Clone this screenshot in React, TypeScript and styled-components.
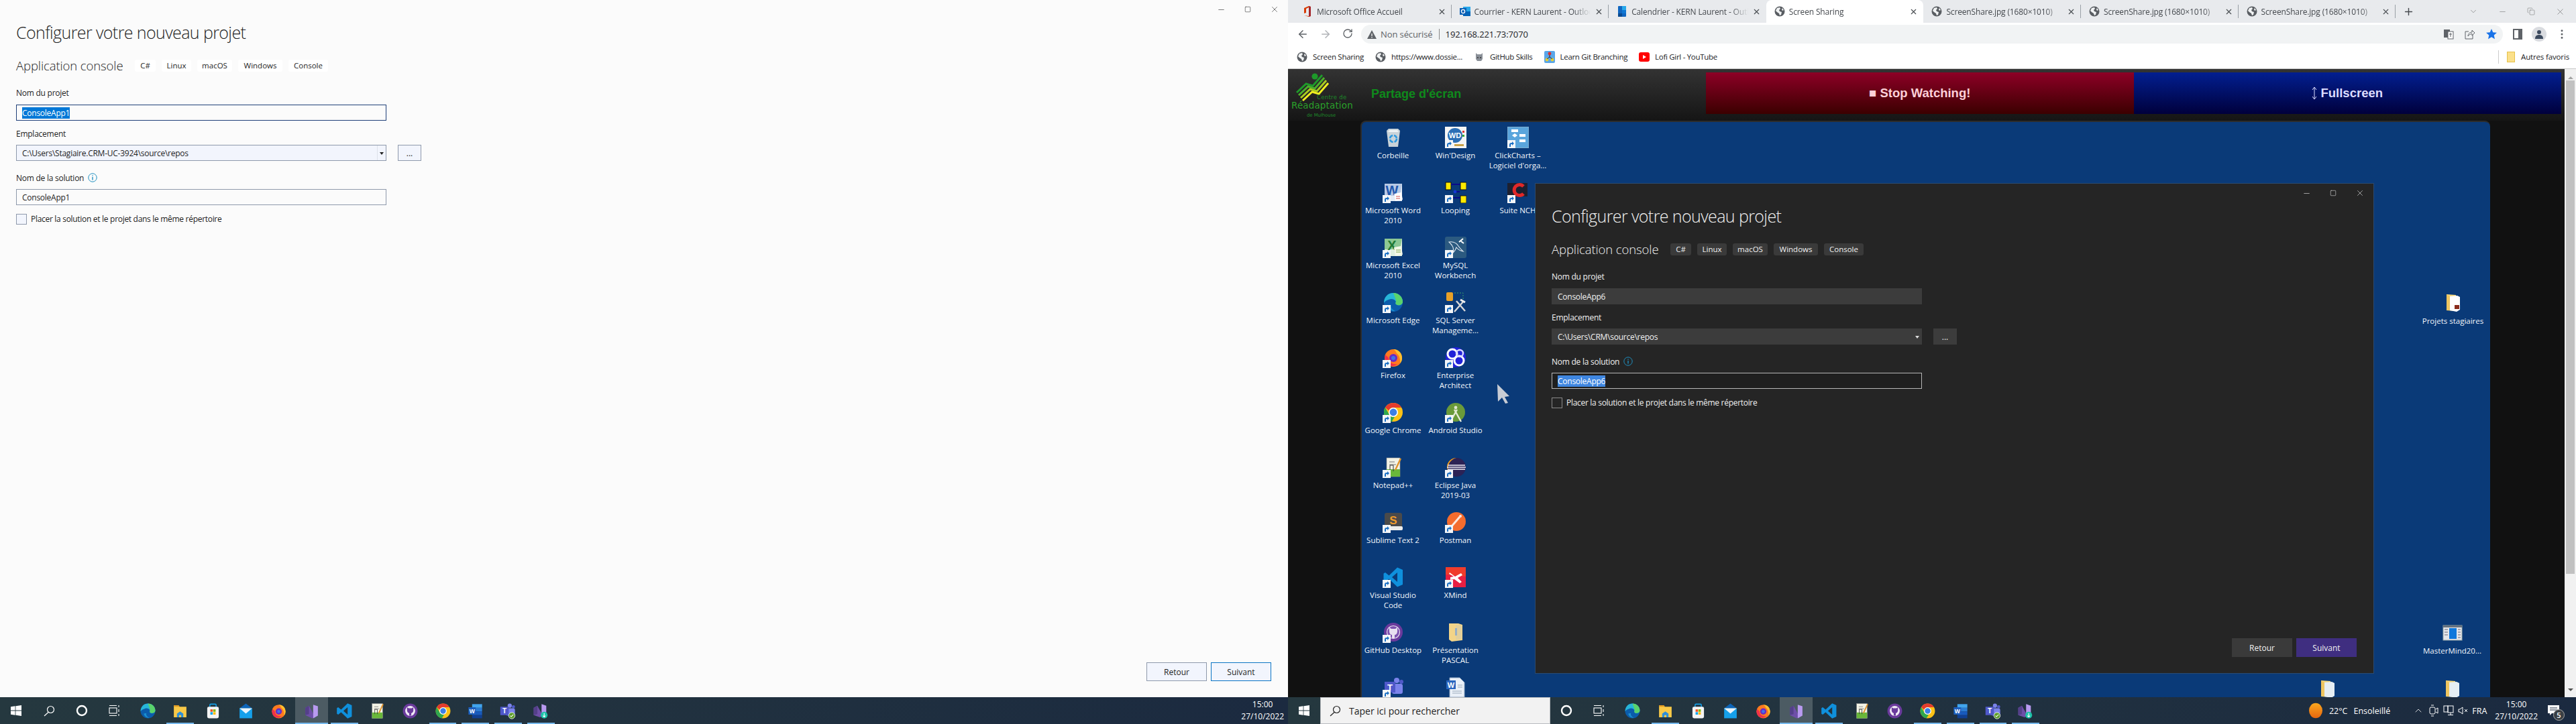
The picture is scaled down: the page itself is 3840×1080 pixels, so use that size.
import React from "react";
import styled, { createGlobalStyle } from "styled-components";
import { ArrowLeft, ArrowRight, RotateCw, Plus, ChevronDown, ChevronUp, Minus, X, Square, MoreVertical, Copy } from "lucide-react";

const UI = `"Open Sans", "Noto Sans", sans-serif`;

const GlobalStyle = createGlobalStyle`
  html, body { margin: 0; padding: 0; width: 3840px; height: 1080px; overflow: hidden; background: #000; }
  body { font-family: ${UI}; }
  * { box-sizing: border-box; }
`;

/* ---------- drawings ---------- */

const Svg: React.FC<{ size?: number; children: React.ReactNode }> = ({ size = 32, children }) => (
  <svg width={size} height={size} viewBox="0 0 32 32">{children}</svg>
);

const art: Record<string, React.ReactNode> = {
  edge: <>
    <circle cx="16" cy="16" r="14" fill="#0b5cab" />
    <path d="M2 17C2 8 8 2 16 2c8 0 14 6 14 13 0 4-4 6-8 5-3-1-3-3-2-5-2-4-7-5-11-3-4 1-6 3-7 5z" fill="#27b5d8" />
    <path d="M16 2c8 0 14 6 14 13 0 4-4 6-8 5-3-1-3-3-2-5 0-4-3-10-4-13z" fill="#5ad26b" />
    <path d="M8 21c1 5 6 9 11 8-5-2-7-5-6-9z" fill="#1a8fd0" />
  </>,
  chrome: <>
    <circle cx="16" cy="16" r="14" fill="#fbc116" />
    <path d="M16 2a14 14 0 0 1 12.1 7H16a7 7 0 0 0-6.6 4.6L3.9 9A14 14 0 0 1 16 2z" fill="#e33b2e" />
    <path d="M3.9 9 10 19.6a7 7 0 0 0 8 3.2L13.8 30A14 14 0 0 1 3.9 9z" fill="#2fa84f" />
    <circle cx="16" cy="16" r="7" fill="#fff" /><circle cx="16" cy="16" r="5.4" fill="#3b7fe6" />
  </>,
  firefox: <>
    <circle cx="16" cy="17" r="13" fill="#ff7a1f" />
    <path d="M16 4c8 0 13 6 13 13 0 3-1 6-3 8 1-6-1-12-5-15-1-3-3-5-5-6z" fill="#ffc02e" />
    <path d="M4 12c-2 6 0 13 6 16 4 2 9 1 12-2-6 1-13-2-13-8 0-3-3-3-5-6z" fill="#f0304a" />
    <circle cx="16" cy="17" r="6" fill="#6a2bc4" /><circle cx="16" cy="17" r="3" fill="#3f74e8" />
  </>,
  vs: <>
    <path d="M4 10l7-4 12 22-6 2L4 24z" fill="#6e4fa8" />
    <path d="M4 10l7-4v16l-7 2z" fill="#544089" />
    <path d="M19 4l9 3v18l-9 5z" fill="#b99af0" />
  </>,
  vscode: <path fillRule="evenodd" d="M22 1.5l8 3.5v22l-8 3.5L9.5 18.5 4 23l-2.5-1.5v-11L4 9l5.5 4.5L22 1.5zM22 9l-8 7 8 7z" fill="#0f90dc" />,
  notepad: <>
    <rect x="6" y="2" width="20" height="28" fill="#f3f3e6" stroke="#888" strokeWidth=".6" />
    <rect x="6" y="19" width="20" height="11" fill="#69b83a" />
    <path d="M10 8h8M10 12h10" stroke="#777" strokeWidth="1" />
    <path d="M27 3l-8 17" stroke="#e0922a" strokeWidth="2.4" />
    <path d="M11 22v-9h5v9" stroke="#333" fill="none" strokeWidth="1" />
  </>,
  github: <>
    <circle cx="16" cy="16" r="14" fill="#6a3a9c" />
    <circle cx="16" cy="16" r="9.5" fill="#7e51b0" stroke="#e8dff0" strokeWidth="1.2" />
    <path d="M10 9l3 2h6l3-2v6c0 3-2 5-4 5v5h-4v-5c-2 0-4-2-4-5z" fill="#e8dff0" />
  </>,
  githubDark: <>
    <circle cx="16" cy="16" r="14" fill="#6a3a9c" />
    <circle cx="16" cy="16" r="9.5" fill="#f0eaf5" />
    <path d="M10 9l3 2h6l3-2v6c0 3-2 5-4 5v5h-4v-5c-2 0-4-2-4-5z" fill="#6a3a9c" />
  </>,
  word: <>
    <rect x="10" y="3" width="19" height="7" fill="#41a5ee" /><rect x="10" y="10" width="19" height="7" fill="#2b7cd3" />
    <rect x="10" y="17" width="19" height="7" fill="#185abd" /><rect x="10" y="24" width="19" height="6" fill="#103f91" />
    <rect x="3" y="9" width="14" height="14" fill="#1d5fbf" />
    <text x="10" y="20" fontSize="11" fontWeight="700" fontFamily="Liberation Sans" fill="#fff" textAnchor="middle">W</text>
  </>,
  teams: <>
    <circle cx="21" cy="6" r="4" fill="#7b83eb" /><circle cx="28" cy="8" r="3" fill="#5059c9" />
    <rect x="14" y="11" width="16" height="15" rx="3" fill="#7b83eb" />
    <rect x="3" y="8" width="16" height="16" fill="#4f58ca" />
    <text x="11" y="21" fontSize="13" fontWeight="700" fontFamily="Liberation Sans" fill="#fff" textAnchor="middle">T</text>
  </>,
  teamsBadge: <>
    <circle cx="19" cy="6" r="4" fill="#7b83eb" /><circle cx="26" cy="8" r="3" fill="#5059c9" />
    <rect x="12" y="11" width="17" height="14" rx="3" fill="#7b83eb" />
    <rect x="1" y="8" width="16" height="16" fill="#4f58ca" />
    <text x="9" y="21" fontSize="13" fontWeight="700" fontFamily="Liberation Sans" fill="#fff" textAnchor="middle">T</text>
    <circle cx="23" cy="25" r="6" fill="#5d9c2a" stroke="#fff" strokeWidth="1" />
    <path d="M20 25l2 2 4-4" stroke="#fff" fill="none" strokeWidth="1.4" />
  </>,
  vsinstall: <>
    <path d="M2 10l7-4 11 20-6 2L2 24z" fill="#6e4fa8" />
    <path d="M2 10l7-4v16l-7 2z" fill="#544089" />
    <path d="M17 3l9 3v14l-9 6z" fill="#b99af0" />
    <circle cx="22" cy="24" r="6.5" fill="#1dc2a8" />
    <path d="M22 20v7M19.5 25l2.5 2.5 2.5-2.5" stroke="#fff" strokeWidth="1.4" fill="none" />
  </>,
  explorer: <>
    <path d="M4 5h9l2 3h13v20H4z" fill="#f8c948" />
    <path d="M4 5h9l2 3H4z" fill="#e09a22" />
    <path d="M10 28v-7l6-4 6 4v7h-4v-4h-4v4z" fill="#2e8fd8" />
  </>,
  store: <>
    <path d="M10 9V5a2 2 0 0 1 2-2h8a2 2 0 0 1 2 2v4" fill="none" stroke="#14a0e8" strokeWidth="2" />
    <rect x="5" y="8" width="22" height="22" rx="3" fill="#f4f4f4" />
    <rect x="11" y="13" width="4.6" height="4.6" fill="#f25022" /><rect x="16.4" y="13" width="4.6" height="4.6" fill="#7fba00" />
    <rect x="11" y="18.4" width="4.6" height="4.6" fill="#00a4ef" /><rect x="16.4" y="18.4" width="4.6" height="4.6" fill="#ffb900" />
  </>,
  mail: <>
    <path d="M16 2l12 9H4z" fill="#0c64b8" />
    <rect x="4" y="11" width="24" height="19" fill="#15a0ea" />
    <path d="M4 11l12 10 12-10z" fill="#e8f4fc" />
  </>,
  recycle: <>
    <path d="M6 6l3-3h14l3 3-3 24H9z" fill="#c9d3d9" />
    <path d="M10 5h12l2 3H8z" fill="#eef2f4" />
    <circle cx="16" cy="18" r="5" fill="none" stroke="#2f9ae0" strokeWidth="2.6" strokeDasharray="6 2" />
  </>,
  windesign: <>
    <rect x="0" y="0" width="32" height="32" fill="#f5f5f5" />
    <circle cx="15" cy="13" r="11" fill="#2d6fb5" />
    <text x="15" y="17" fontSize="11" fontWeight="700" fontFamily="Liberation Sans" fill="#fff" textAnchor="middle">WD</text>
    <rect x="26" y="6" width="3" height="3" fill="#d33" /><rect x="26" y="12" width="3" height="3" fill="#3a3" />
    <rect x="14" y="26" width="14" height="3" fill="#c9a24a" />
  </>,
  clickcharts: <>
    <rect x="0" y="0" width="32" height="32" fill="#5aa5dc" stroke="#9cb4c6" />
    <rect x="6" y="4" width="10" height="4" fill="#fff" /><path d="M11 10l4 3-4 3-4-3z" fill="#fff" />
    <rect x="18" y="11" width="9" height="4" fill="#fff" /><rect x="18" y="19" width="9" height="4" fill="#fff" />
  </>,
  wordold: <>
    <path d="M3 3h26v26H3z" fill="#e6eef8" />
    <path d="M3 3l26 0-3 18H3z" fill="#2a5caa" opacity=".25" />
    <text x="14" y="20" fontSize="20" fontWeight="700" fontFamily="Liberation Sans" fill="#1f58ae" textAnchor="middle">W</text>
    <rect x="18" y="17" width="11" height="11" fill="#fff" transform="rotate(-10 23 22)" />
    <path d="M20 22h6M20 25h6" stroke="#d05050" strokeWidth="1" />
  </>,
  looping: <>
    <rect x="1" y="1" width="8" height="11" fill="#ffea00" stroke="#111" />
    <rect x="23" y="1" width="9" height="11" fill="#ffea00" stroke="#111" />
    <rect x="23" y="21" width="9" height="11" fill="#ffea00" stroke="#111" />
    <path d="M9 4h14M9 24h14M14 15h8" stroke="#0a0a8a" strokeWidth="2" />
    <circle cx="15" cy="15" r="2.4" fill="#1438d0" />
  </>,
  nch: <>
    <rect x="0" y="2" width="30" height="20" fill="#1c2030" />
    <path d="M24 7a8 8 0 1 0 0 11" fill="none" stroke="#e02828" strokeWidth="5" />
  </>,
  excel: <>
    <path d="M3 3h26v26H3z" fill="#dff0df" />
    <path d="M3 3h26l-3 16H3z" fill="#3aa04a" opacity=".5" />
    <text x="14" y="20" fontSize="20" fontWeight="700" fontFamily="Liberation Sans" fill="#1f7a35" textAnchor="middle">X</text>
    <rect x="18" y="15" width="11" height="13" fill="#f4f8e8" transform="rotate(-10 23 22)" />
    <path d="M20 20h7M20 23h7" stroke="#7aa84a" strokeWidth="1" />
  </>,
  mysql: <>
    <rect x="0" y="0" width="32" height="32" rx="3" fill="#2c5a80" />
    <path d="M6 8c6-1 11 1 14 6 2 3 5 6 7 8-4-1-8-3-10-6-1 3-3 6-5 8 1-4 1-7-1-10-1-2-3-4-5-6z" fill="none" stroke="#dfe8f0" strokeWidth="1.1" />
    <path d="M21 8l6-5M24 7l4 3" stroke="#fff" strokeWidth="2" />
  </>,
  ssms: <>
    <rect x="2" y="1" width="10" height="13" rx="2" fill="#e8a028" />
    <path d="M14 2h13v11" stroke="#3aa06a" strokeDasharray="2 2" fill="none" />
    <path d="M14 30L28 14M17 14l13 15" stroke="#d8d8d8" strokeWidth="2.4" />
    <path d="M23 12l7 4" stroke="#eee" strokeWidth="3" />
  </>,
  ea: <>
    <circle cx="16" cy="16" r="15" fill="#2222d8" />
    <circle cx="11" cy="11" r="7" fill="none" stroke="#fff" strokeWidth="3" />
    <circle cx="21" cy="21" r="7" fill="none" stroke="#fff" strokeWidth="3" />
    <circle cx="22" cy="10" r="5" fill="none" stroke="#d8d8ff" strokeWidth="2.4" />
  </>,
  android: <>
    <circle cx="16" cy="16" r="14" fill="#6a9a3a" />
    <path d="M8 30l10-18M24 30L14 12" stroke="#e6ecd8" strokeWidth="2.4" />
    <circle cx="16" cy="9" r="2.4" fill="#dfe6d0" />
  </>,
  eclipse: <>
    <circle cx="17" cy="16" r="14" fill="#2c2255" />
    <path d="M3 16A14 14 0 0 1 17 2 16 16 0 0 0 5 22c-1-2-2-4-2-6z" fill="#f0a020" />
    <path d="M4 13h26M3 16h28M4 19h26" stroke="#f2f2fa" strokeWidth="1.4" />
  </>,
  sublime: <>
    <rect x="3" y="2" width="26" height="24" rx="3" fill="#4a4a4a" />
    <rect x="2" y="22" width="28" height="6" rx="2" fill="#ececec" />
    <text x="16" y="19" fontSize="17" fontWeight="700" fontFamily="Liberation Sans" fill="#f09a2a" textAnchor="middle">S</text>
  </>,
  postman: <>
    <circle cx="17" cy="15" r="14" fill="#f46c2e" />
    <path d="M10 22L22 8" stroke="#fbe7dc" strokeWidth="3" />
    <circle cx="23" cy="7" r="2" fill="#fbe7dc" />
  </>,
  xmind: <>
    <rect x="1" y="1" width="30" height="30" fill="#e81f42" />
    <path d="M1 1h30v14L1 12z" fill="#f03c2c" />
    <path d="M7 9l8 6 9-5 2 3-7 4 6 6-3 2-8-6-6 1v-4l5-1-7-4z" fill="#fff" />
  </>,
  folderDoc: <>
    <path d="M6 3l14 1v24L6 27z" fill="#f6d87e" />
    <path d="M11 6l11-1 4 2v19l-5 3-10-2z" fill="#fff" />
    <path d="M6 3l5 3v21l-5 0z" fill="#eec560" />
    <rect x="18" y="19" width="7" height="6" fill="#8a2c1c" />
  </>,
  folderDocB: <>
    <path d="M6 3l14 1v24L6 27z" fill="#f6d87e" />
    <path d="M11 6l11-1 4 2v19l-5 3-10-2z" fill="#e6eef4" />
    <path d="M6 3l5 3v21l-5 0z" fill="#eec560" />
  </>,
  folderTall: <>
    <path d="M6 3l14 0 6 2v23l-16 2-4-3z" fill="#f3d488" />
    <path d="M16 5l9 1v20l-9 2z" fill="#e2cf9c" />
    <rect x="15" y="10" width="3" height="11" fill="#9ab0c4" />
  </>,
  mastermind: <>
    <rect x="2" y="5" width="28" height="22" fill="#e4e6ea" stroke="#9aa" />
    <rect x="11" y="9" width="11" height="16" fill="#0f78dc" />
    <path d="M4 11h5M4 15h5M4 19h5M24 11h4M24 15h4M24 19h4M24 23h4" stroke="#667" strokeWidth="1" />
    <rect x="2" y="5" width="28" height="3" fill="#67727e" />
  </>,
  worddoc: <>
    <path d="M7 2h15l7 7v22H7z" fill="#eaf0f8" stroke="#8ea6c2" />
    <rect x="2" y="6" width="14" height="13" fill="#2a66c0" />
    <text x="9" y="16.5" fontSize="11" fontWeight="700" fontFamily="Liberation Sans" fill="#fff" textAnchor="middle">W</text>
    <path d="M11 22h14M11 25h14M19 13h7M19 16h7" stroke="#9ab" strokeWidth="1" />
  </>,
};

const Art: React.FC<{ name: string; size?: number }> = ({ name, size = 32 }) => <Svg size={size}>{art[name]}</Svg>;

const Globe = () => (
  <svg width="16" height="16" viewBox="0 0 16 16">
    <circle cx="8" cy="8" r="7.5" fill="#5a5e63" />
    <path d="M4 3l4-1 1 2-2 2 1 2 3 1-1 4-2 1-1-3-3-2-2-2zM12 3l2 3-2 1-1-2z" fill="#f1f3f4" />
  </svg>
);

const OfficeIcon = () => (
  <svg width="16" height="16" viewBox="0 0 16 16">
    <path d="M3 3l7-3 3 1v14l-3 1-7-2 7 1V2L6 4v6l-3 1z" fill="#d83b01" />
    <path d="M10 0l3 1v14l-3 1z" fill="#a4262c" />
  </svg>
);
const OutlookIcon = () => (
  <svg width="16" height="16" viewBox="0 0 16 16">
    <rect x="5" y="1" width="11" height="14" fill="#28a8ea" /><rect x="5" y="8" width="11" height="7" fill="#0364b8" />
    <rect x="0" y="3" width="10" height="10" fill="#0a5fb5" /><circle cx="5" cy="8" r="2.6" fill="none" stroke="#fff" strokeWidth="1.3" />
  </svg>
);
const CalendarIcon = () => (
  <svg width="16" height="16" viewBox="0 0 16 16">
    <rect x="2" y="0" width="12" height="16" rx="1" fill="#1066c0" /><rect x="8" y="0" width="6" height="6" fill="#28a8ea" />
    <rect x="8" y="6" width="6" height="5" fill="#0f78d4" /><rect x="2" y="11" width="6" height="5" fill="#0a4a90" />
  </svg>
);

const ShortcutMark = () => (
  <svg width="12" height="12" viewBox="0 0 12 12">
    <rect width="12" height="12" fill="#f4f6f8" />
    <path d="M3 10V7c0-2 1-3 3-3h1V2l3 3-3 3V6H6c-1 0-1 1-1 2v2z" fill="#1a6fc4" />
  </svg>
);

const WinLogo: React.FC<{ size?: number }> = ({ size = 16 }) => (
  <svg width={size} height={size} viewBox="0 0 16 16" fill="#fff">
    <path d="M0 2.3l6.6-1v6.3H0zM7.4 1.2L16 0v7.6H7.4zM0 8.4h6.6v6.3l-6.6-1zM7.4 8.4H16V16l-8.6-1.2z" />
  </svg>
);
const SearchGlyph: React.FC<{ color: string }> = ({ color }) => (
  <svg width="17" height="17" viewBox="0 0 17 17" fill="none" stroke={color} strokeWidth="1.2">
    <circle cx="10.5" cy="6.5" r="5" /><path d="M7 10.5L1 16" />
  </svg>
);
const CortanaGlyph = () => (
  <svg width="18" height="18" viewBox="0 0 18 18"><circle cx="9" cy="9" r="7" fill="none" stroke="#fff" strokeWidth="2.4" /></svg>
);
const TaskViewGlyph = () => (
  <svg width="18" height="18" viewBox="0 0 18 18" fill="none" stroke="#fff" strokeWidth="1.1">
    <rect x="1" y="5" width="11" height="8" /><path d="M1 1.5h11M1 16.5h11M15 1v3M15 7v4M15 14v3" />
  </svg>
);

/* ---------- page frame ---------- */

const Screen = styled.div`
  display: grid;
  grid-template-columns: 1920px 1920px;
  width: 3840px;
  height: 1080px;
`;
const Monitor = styled.div`
  display: flex;
  flex-direction: column;
  height: 1080px;
  min-width: 0;
`;
const MonitorBody = styled.div`
  flex: 1;
  min-height: 0;
  display: flex;
  flex-direction: column;
  overflow: hidden;
`;

/* ---------- taskbar ---------- */

const Taskbar = styled.div`
  height: 40px;
  flex: none;
  display: flex;
  align-items: stretch;
  background: linear-gradient(90deg, #25383f 0%, #22333f 40%, #1b2a40 100%);
  color: #fff;
`;
const TaskCell = styled.div<{ $active?: boolean; $running?: boolean; $w?: number }>`
  position: relative;
  width: ${(p) => p.$w ?? 48.9}px;
  flex: none;
  display: flex;
  align-items: center;
  justify-content: center;
  background: ${(p) => (p.$active ? "#4c5b63" : "transparent")};
  &::after {
    content: "";
    display: ${(p) => (p.$running || p.$active ? "block" : "none")};
    position: absolute;
    bottom: 0;
    left: ${(p) => (p.$active ? 0 : 4)}px;
    right: ${(p) => (p.$active ? 0 : 4)}px;
    height: 2px;
    background: #76b9ed;
  }
`;
const SearchBox = styled.div`
  width: 343px;
  flex: none;
  display: flex;
  align-items: center;
  gap: 12px;
  padding: 0 0 0 13px;
  background: #f2f2f2;
  border: 1px solid #b8bcc0;
  color: #222;
  font-size: 14px;
`;
const Tray = styled.div`
  margin-left: auto;
  display: flex;
  align-items: center;
`;
const Clock = styled.div<{ $pad: number }>`
  display: flex;
  flex-direction: column;
  align-items: center;
  font-size: 12px;
  line-height: 18px;
  padding-right: ${(p) => p.$pad}px;
`;
const TrayText = styled.span<{ $left: number }>`
  font-size: 12.5px;
  margin-left: ${(p) => p.$left}px;
  white-space: nowrap;
`;
const Sun = styled.span`
  display: block;
  width: 20px;
  height: 30px;
  border-radius: 50%;
  background: linear-gradient(180deg, #f9a71e, #e8660f);
  transform: scale(1, 0.75);
`;
const TrayIcon = styled.span<{ $left: number }>`
  display: flex;
  margin-left: ${(p) => p.$left}px;
`;
const Notify = styled.span`
  position: relative;
  display: flex;
  margin: 0 25px 0 15px;
`;
const NotifyBadge = styled.span`
  position: absolute;
  right: -8px;
  bottom: -7px;
  width: 17px;
  height: 17px;
  border-radius: 50%;
  background: #3a3f44;
  border: 1px solid #aaa;
  font-size: 11px;
  line-height: 15px;
  text-align: center;
  font-weight: 600;
`;

const taskIcons: { n: string; running?: boolean; active?: boolean }[] = [
  { n: "edge" },
  { n: "explorer", running: true },
  { n: "store" },
  { n: "mail" },
  { n: "firefox" },
  { n: "vs", active: true },
  { n: "vscode", running: true },
  { n: "notepad" },
  { n: "githubDark" },
  { n: "chrome", running: true },
  { n: "word", running: true },
  { n: "teamsBadge", running: true },
  { n: "vsinstall", running: true },
];

const TaskApps = () => (
  <>
    <TaskCell><CortanaGlyph /></TaskCell>
    <TaskCell><TaskViewGlyph /></TaskCell>
    {taskIcons.map((t) => (
      <TaskCell key={t.n} $active={t.active} $running={t.running}>
        <Art name={t.n} size={25} />
      </TaskCell>
    ))}
  </>
);

/* ---------- configuration dialog ---------- */

const ConfigWindow = styled.section<{ $dark?: boolean }>`
  position: relative;
  flex: 1;
  min-height: 0;
  display: flex;
  flex-direction: column;
  padding: 29px 25px 24px 24px;
  background: ${(p) => (p.$dark ? "#252525" : "#fbfbfb")};
  color: ${(p) => (p.$dark ? "#f1f1f1" : "#1e1e1e")};
`;
const WinControls = styled.div<{ $dark?: boolean }>`
  position: absolute;
  top: 4px;
  right: 0;
  display: flex;
  color: ${(p) => (p.$dark ? "#e0e0e0" : "#333")};
`;
const WinControl = styled.span`
  width: 40px;
  height: 20px;
  display: flex;
  align-items: center;
  justify-content: center;
`;
const Title = styled.h1`
  margin: 0;
  height: 38px;
  font-size: 25px;
  line-height: 38px;
  font-weight: 300;
  letter-spacing: -0.6px;
  white-space: nowrap;
`;
const TemplateRow = styled.div`
  margin-top: 21px;
  height: 19px;
  display: flex;
  align-items: center;
`;
const TemplateName = styled.h2`
  margin: 0 16px 0 0;
  width: 161px;
  font-size: 18.5px;
  line-height: 19px;
  font-weight: 300;
  white-space: nowrap;
  letter-spacing: -0.1px;
`;
const Chips = styled.div`
  display: flex;
  gap: 9px;
`;
const Chip = styled.span<{ $dark?: boolean; $w: number }>`
  width: ${(p) => p.$w}px;
  height: 18px;
  display: flex;
  align-items: center;
  justify-content: center;
  border-radius: 3px;
  font-size: 11.5px;
  background: ${(p) => (p.$dark ? "#3a3a3a" : "#ffffff")};
`;
const FieldLabel = styled.div<{ $top: number; $bottom: number }>`
  margin: ${(p) => p.$top}px 0 ${(p) => p.$bottom}px;
  height: 16px;
  display: flex;
  align-items: center;
  gap: 6px;
  font-size: 12px;
  letter-spacing: -0.25px;
`;
const Info = styled.span`
  display: flex;
`;
const FieldRow = styled.div`
  display: flex;
  gap: 17px;
`;
const TextField = styled.div<{ $dark?: boolean; $focus?: boolean }>`
  width: 552px;
  height: 24px;
  display: flex;
  align-items: center;
  padding-left: 8px;
  font-size: 12px;
  letter-spacing: -0.25px;
  background: ${(p) => (p.$dark ? (p.$focus ? "#1f1f1f" : "#3c3c3c") : "#fbfbfb")};
  border: 1px solid ${(p) => (p.$dark ? (p.$focus ? "#b8b8b8" : "#3c3c3c") : p.$focus ? "#1f3f78" : "#8e99ab")};
`;
const Selected = styled.span<{ $dark?: boolean }>`
  background: ${(p) => (p.$dark ? "#3f86e0" : "#0078d7")};
  color: #fff;
  line-height: 17px;
`;
const SelectField = styled(TextField)`
  justify-content: space-between;
  padding-right: 0;
  background: ${(p) => (p.$dark ? "#3c3c3c" : "#f2f5fd")};
`;
const Caret = styled.span<{ $dark?: boolean }>`
  width: 13px;
  height: 22px;
  display: flex;
  align-items: center;
  justify-content: center;
  border-left: 1px solid ${(p) => (p.$dark ? "#3c3c3c" : "#dde2ea")};
  &::before {
    content: "";
    border: 3px solid transparent;
    border-top: 4px solid ${(p) => (p.$dark ? "#ddd" : "#222")};
    margin-top: 4px;
  }
`;
const BrowseButton = styled.span<{ $dark?: boolean }>`
  width: 35px;
  height: 24px;
  display: flex;
  align-items: center;
  justify-content: center;
  font-size: 12px;
  background: ${(p) => (p.$dark ? "#3c3c3c" : "#f2f5fd")};
  border: 1px solid ${(p) => (p.$dark ? "#3c3c3c" : "#8e99ab")};
`;
const CheckRow = styled.div`
  margin-top: 12px;
  display: flex;
  align-items: center;
  gap: 6px;
  font-size: 12px;
  letter-spacing: -0.3px;
`;
const CheckBox = styled.span<{ $dark?: boolean }>`
  width: 16px;
  height: 16px;
  background: ${(p) => (p.$dark ? "#252525" : "#f2f5fd")};
  border: 1px solid ${(p) => (p.$dark ? "#8a8a8a" : "#8e99ab")};
`;
const Footer = styled.div`
  margin-top: auto;
  display: flex;
  justify-content: flex-end;
  gap: 6px;
`;
const FootButton = styled.span<{ $kind: "light" | "lightPrimary" | "dark" | "darkPrimary" }>`
  width: 90px;
  height: 28px;
  display: flex;
  align-items: center;
  justify-content: center;
  font-size: 12px;
  background: ${(p) =>
    ({ light: "#f2f5fd", lightPrimary: "#f2f5fd", dark: "#3a3a3a", darkPrimary: "#3f2e80" })[p.$kind]};
  border: 1px solid ${(p) =>
    ({ light: "#8e99ab", lightPrimary: "#0a74c4", dark: "#3a3a3a", darkPrimary: "#3f2e80" })[p.$kind]};
`;

const InfoGlyph = () => (
  <svg width="14" height="14" viewBox="0 0 14 14" fill="none" stroke="#1f8fc0">
    <circle cx="7" cy="7" r="6.2" />
    <path d="M7 6v4.4M7 3.4v1.4" strokeWidth="1.4" />
  </svg>
);

const Dialog: React.FC<{ dark?: boolean; project: string; path: string; solution: string; focusSolution?: boolean }> = ({
  dark, project, path, solution, focusSolution,
}) => (
  <ConfigWindow $dark={dark}>
    <WinControls $dark={dark}>
      <WinControl><Minus size={13} strokeWidth={1.2} /></WinControl>
      <WinControl><Square size={10} strokeWidth={1.4} /></WinControl>
      <WinControl><X size={14} strokeWidth={1.1} /></WinControl>
    </WinControls>
    <Title>Configurer votre nouveau projet</Title>
    <TemplateRow>
      <TemplateName>Application console</TemplateName>
      <Chips>
        <Chip $dark={dark} $w={31}>C#</Chip>
        <Chip $dark={dark} $w={44}>Linux</Chip>
        <Chip $dark={dark} $w={52}>macOS</Chip>
        <Chip $dark={dark} $w={66}>Windows</Chip>
        <Chip $dark={dark} $w={59}>Console</Chip>
      </Chips>
    </TemplateRow>
    <FieldLabel $top={23} $bottom={10}>Nom du projet</FieldLabel>
    <TextField $dark={dark} $focus={!focusSolution}>
      {focusSolution ? project : <Selected>{project}</Selected>}
    </TextField>
    <FieldLabel $top={11} $bottom={9}>Emplacement</FieldLabel>
    <FieldRow>
      <SelectField $dark={dark}>
        {path}
        <Caret $dark={dark} />
      </SelectField>
      <BrowseButton $dark={dark}>...</BrowseButton>
    </FieldRow>
    <FieldLabel $top={17} $bottom={9}>
      Nom de la solution
      <Info><InfoGlyph /></Info>
    </FieldLabel>
    <TextField $dark={dark} $focus={focusSolution}>
      {focusSolution ? <Selected $dark={dark}>{solution}</Selected> : solution}
    </TextField>
    <CheckRow>
      <CheckBox $dark={dark} />
      Placer la solution et le projet dans le même répertoire
    </CheckRow>
    <Footer>
      <FootButton $kind={dark ? "dark" : "light"}>Retour</FootButton>
      <FootButton $kind={dark ? "darkPrimary" : "lightPrimary"}>Suivant</FootButton>
    </Footer>
  </ConfigWindow>
);

/* ---------- browser ---------- */

const TabStrip = styled.div`
  height: 34px;
  flex: none;
  display: flex;
  align-items: stretch;
  padding-left: 9px;
  background: #e8eaed;
`;
const Tab = styled.div<{ $active?: boolean; $sep?: boolean }>`
  position: relative;
  width: 234.6px;
  flex: none;
  display: flex;
  align-items: center;
  gap: 6px;
  padding: 0 8px 0 12px;
  font-size: 12px;
  letter-spacing: -0.15px;
  color: #45494e;
  border-radius: ${(p) => (p.$active ? "8px 8px 0 0" : "0")};
  background: ${(p) => (p.$active ? "#fff" : "transparent")};
  &::after {
    content: "";
    display: ${(p) => (p.$sep ? "block" : "none")};
    position: absolute;
    right: 0;
    top: 7px;
    bottom: 7px;
    width: 1px;
    background: #9aa0a6;
  }
`;
const TabTitle = styled.span`
  flex: 1;
  min-width: 0;
  white-space: nowrap;
  overflow: hidden;
  -webkit-mask-image: linear-gradient(90deg, #000 85%, transparent);
`;
const TabClose = styled.span`
  display: flex;
  color: #45494e;
`;
const NewTab = styled.span`
  display: flex;
  align-items: center;
  margin-left: 11px;
  color: #45494e;
`;
const FrameControls = styled.div`
  margin-left: auto;
  display: flex;
  align-items: center;
  gap: 30px;
  padding-right: 16px;
  color: #666;
`;
const Toolbar = styled.div`
  height: 36px;
  flex: none;
  display: flex;
  align-items: center;
  padding: 0 12px 2px 13px;
  background: #fff;
  color: #5f6368;
`;
const NavGroup = styled.div`
  display: flex;
  gap: 16px;
  width: 96px;
`;
const NavIcon = styled.span<{ $off?: boolean }>`
  display: flex;
  color: ${(p) => (p.$off ? "#b0b3b7" : "#5f6368")};
`;
const UrlBar = styled.div`
  flex: 1;
  height: 28px;
  display: flex;
  align-items: center;
  padding: 0 9px 0 9px;
  border-radius: 14px;
  background: #f1f3f4;
  font-size: 13px;
  letter-spacing: -0.1px;
  color: #5f6368;
`;
const UrlDim = styled.span`
  margin-left: 6px;
  padding-right: 9px;
  border-right: 1px solid #888;
  line-height: 16px;
`;
const UrlHost = styled.span`
  margin-left: 9px;
  color: #202124;
`;
const UrlTools = styled.div`
  margin-left: auto;
  display: flex;
  align-items: center;
  gap: 16px;
`;
const ToolEnd = styled.div`
  margin-left: 15px;
  display: flex;
  align-items: center;
  gap: 14px;
  color: #5f6368;
`;
const Avatar = styled.span`
  width: 22px;
  height: 22px;
  border-radius: 50%;
  background: #dadce0;
  display: flex;
  align-items: center;
  justify-content: center;
`;
const Bookmarks = styled.div`
  height: 33px;
  flex: none;
  display: flex;
  align-items: center;
  padding: 0 10px 3px 13px;
  gap: 17px;
  background: #fff;
  border-bottom: 1px solid #c8c8c8;
  font-size: 11.5px;
  letter-spacing: -0.3px;
  color: #202124;
`;
const Bookmark = styled.span`
  display: flex;
  align-items: center;
  gap: 8px;
  white-space: nowrap;
`;
const BookmarkEnd = styled.span`
  margin-left: auto;
  display: flex;
  align-items: center;
  gap: 9px;
  padding-left: 12px;
  border-left: 1px solid #ccc;
  height: 20px;
  letter-spacing: -0.15px;
`;

const PageRow = styled.div`
  flex: 1;
  min-height: 0;
  display: flex;
`;
const Page = styled.div`
  flex: 1;
  min-width: 0;
  display: flex;
  flex-direction: column;
  background: #111;
`;
const Scrollbar = styled.div`
  width: 17px;
  flex: none;
  display: flex;
  flex-direction: column;
  align-items: center;
  background: #f1f1f1;
  padding-top: 7px;
`;
const ScrollArrow = styled.span<{ $down?: boolean }>`
  border: 4px solid transparent;
  ${(p) => (p.$down ? "border-top: 4px solid #505050; margin-top: auto; margin-bottom: 5px;" : "border-bottom: 4px solid #a3a3a3; margin-bottom: 2px;")}
`;
const ScrollThumb = styled.span`
  width: 13px;
  height: 736px;
  background: #c1c1c1;
`;
const Header = styled.header`
  height: 77px;
  flex: none;
  display: flex;
  align-items: flex-start;
  padding: 5px 5px 0 5px;
  background: linear-gradient(180deg, #333 0%, #151515 100%);
`;
const Brand = styled.div`
  flex: 1;
  display: flex;
  align-items: center;
  gap: 19px;
  height: 72px;
`;
const BrandTitle = styled.div`
  font-family: "Liberation Sans", Arial, sans-serif;
  font-size: 18px;
  font-weight: 700;
  color: #0f8a1c;
  margin-top: -8px;
`;
const HeadButton = styled.div<{ $kind: "stop" | "full" }>`
  width: 637.5px;
  height: 62px;
  flex: none;
  display: flex;
  align-items: center;
  justify-content: center;
  gap: 5px;
  font-family: "Liberation Sans", Arial, sans-serif;
  font-size: 18.5px;
  font-weight: 700;
  color: ${(p) => (p.$kind === "stop" ? "#fcd0d8" : "#dcdcff")};
  background: ${(p) =>
    p.$kind === "stop"
      ? "linear-gradient(180deg, #8d0026, #3b0000)"
      : "linear-gradient(180deg, #021f90, #00003c)"};
`;
const Desktop = styled.main`
  position: relative;
  flex: 1;
  min-height: 0;
  margin: 0 111px 0 108px;
  border: 2px solid #2c2c2c;
  border-width: 2px 0 0 2px;
  border-top-left-radius: 8px;
  border-top-right-radius: 8px;
  background: #0a3a78;
  overflow: hidden;
  display: grid;
  grid-auto-flow: column;
  grid-template-rows: repeat(11, 82px);
  grid-auto-columns: 93px;
`;
const DeskItem = styled.div`
  display: flex;
  flex-direction: column;
  align-items: center;
  padding-top: 7px;
`;
const FreeItem = styled.div<{ $x: number; $y: number }>`
  position: absolute;
  left: ${(p) => p.$x}px;
  top: ${(p) => p.$y}px;
  width: 93px;
  display: flex;
  flex-direction: column;
  align-items: center;
`;
const DeskIconBox = styled.div`
  position: relative;
  width: 32px;
  height: 32px;
  display: flex;
`;
const ShortcutBadge = styled.span`
  position: absolute;
  left: 0;
  bottom: 0;
  display: flex;
`;
const DeskLabel = styled.div`
  margin-top: 3px;
  width: 92px;
  text-align: center;
  font-size: 11.5px;
  line-height: 15px;
  color: #f2f6fb;
  white-space: pre-line;
`;
const Cursor = styled.svg`
  position: absolute;
  left: 201px;
  top: 390px;
`;
const DarkWindow = styled.div`
  position: absolute;
  left: 259px;
  top: 92px;
  width: 1249px;
  height: 730px;
  display: flex;
  box-shadow: 0 0 0 1px #2a4a70;
`;

const desk: { n: string; t?: string; s?: boolean }[] = [
  { n: "recycle", t: "Corbeille" },
  { n: "wordold", t: "Microsoft Word\n2010", s: true },
  { n: "excel", t: "Microsoft Excel\n2010", s: true },
  { n: "edge", t: "Microsoft Edge", s: true },
  { n: "firefox", t: "Firefox", s: true },
  { n: "chrome", t: "Google Chrome", s: true },
  { n: "notepad", t: "Notepad++", s: true },
  { n: "sublime", t: "Sublime Text 2", s: true },
  { n: "vscode", t: "Visual Studio\nCode", s: true },
  { n: "github", t: "GitHub Desktop", s: true },
  { n: "teams", s: true },
  { n: "windesign", t: "Win'Design", s: true },
  { n: "looping", t: "Looping", s: true },
  { n: "mysql", t: "MySQL\nWorkbench", s: true },
  { n: "ssms", t: "SQL Server\nManageme...", s: true },
  { n: "ea", t: "Enterprise\nArchitect", s: true },
  { n: "android", t: "Android Studio", s: true },
  { n: "eclipse", t: "Eclipse Java\n2019-03", s: true },
  { n: "postman", t: "Postman", s: true },
  { n: "xmind", t: "XMind", s: true },
  { n: "folderTall", t: "Présentation\nPASCAL" },
  { n: "worddoc" },
  { n: "clickcharts", t: "ClickCharts –\nLogiciel d'orga...", s: true },
  { n: "nch", t: "Suite NCH", s: true },
];

const Logo = () => (
  <svg width="100" height="72" viewBox="0 0 100 72">
    <circle cx="35" cy="6" r="4.6" fill="#1e9a2a" />
    <path d="M8 30l14-13 10 3 14-16" fill="none" stroke="#1e9a2a" strokeWidth="3" />
    <path d="M11 34l14-13 10 3 14-16" fill="none" stroke="#4cb02a" strokeWidth="3" />
    <path d="M14 38l14-13 10 3 14-16" fill="none" stroke="#a8cc20" strokeWidth="3" />
    <path d="M17 42l14-13 10 3 14-16" fill="none" stroke="#f0ee20" strokeWidth="3" />
    <text x="38" y="40" fontSize="8.5" fontFamily="DejaVu Sans" fill="#1e8a2a" letterSpacing=".3">Centre de</text>
    <text x="0" y="54" fontSize="13.4" fontFamily="DejaVu Sans" fill="#2aa02a" letterSpacing=".2">Réadaptation</text>
    <text x="23" y="66" fontSize="6.8" fontFamily="DejaVu Sans" fill="#1e8a2a">de Mulhouse</text>
  </svg>
);

const SmallX = () => <X size={13} strokeWidth={2} />;

const Browser = () => (
  <MonitorBody>
    <TabStrip>
      <Tab $sep><OfficeIcon /><TabTitle>Microsoft Office Accueil</TabTitle><TabClose><SmallX /></TabClose></Tab>
      <Tab $sep><OutlookIcon /><TabTitle>Courrier - KERN Laurent - Outlook</TabTitle><TabClose><SmallX /></TabClose></Tab>
      <Tab><CalendarIcon /><TabTitle>Calendrier - KERN Laurent - Outlook</TabTitle><TabClose><SmallX /></TabClose></Tab>
      <Tab $active><Globe /><TabTitle>Screen Sharing</TabTitle><TabClose><SmallX /></TabClose></Tab>
      <Tab $sep><Globe /><TabTitle>ScreenShare.jpg (1680×1010)</TabTitle><TabClose><SmallX /></TabClose></Tab>
      <Tab $sep><Globe /><TabTitle>ScreenShare.jpg (1680×1010)</TabTitle><TabClose><SmallX /></TabClose></Tab>
      <Tab $sep><Globe /><TabTitle>ScreenShare.jpg (1680×1010)</TabTitle><TabClose><SmallX /></TabClose></Tab>
      <NewTab><Plus size={17} strokeWidth={2} /></NewTab>
      <FrameControls>
        <ChevronDown size={14} strokeWidth={1} />
        <Minus size={13} strokeWidth={1} />
        <Copy size={12} strokeWidth={1} />
        <X size={15} strokeWidth={1} />
      </FrameControls>
    </TabStrip>
    <Toolbar>
      <NavGroup>
        <NavIcon><ArrowLeft size={18} strokeWidth={2} /></NavIcon>
        <NavIcon $off><ArrowRight size={18} strokeWidth={2} /></NavIcon>
        <NavIcon><RotateCw size={16} strokeWidth={2} /></NavIcon>
      </NavGroup>
      <UrlBar>
        <svg width="14" height="13" viewBox="0 0 14 13"><path d="M7 0l7 13H0z" fill="#5f6368" /><path d="M7 5v4M7 10v1.4" stroke="#fff" strokeWidth="1.2" /></svg>
        <UrlDim>Non sécurisé</UrlDim>
        <UrlHost>192.168.221.73:7070</UrlHost>
        <UrlTools>
          <svg width="16" height="16" viewBox="0 0 16 16"><rect x="1" y="1" width="9" height="12" fill="#5f6368" /><rect x="7" y="4" width="8" height="11" fill="#fff" stroke="#5f6368" /><path d="M9 8h4M11 6v6" stroke="#5f6368" /></svg>
          <svg width="16" height="16" viewBox="0 0 16 16" fill="none" stroke="#5f6368"><path d="M12 9v6H1V4h5" /><path d="M5 11c0-4 3-6 6-6V2l4 4-4 4V7.4c-2 0-4 1-6 3.6z" /></svg>
          <svg width="16" height="16" viewBox="0 0 16 16"><path d="M8 0l2.3 5.3 5.7.5-4.3 3.8 1.3 5.6L8 12.2l-5 3 1.3-5.6L0 5.8l5.7-.5z" fill="#1a73e8" /></svg>
        </UrlTools>
      </UrlBar>
      <ToolEnd>
        <svg width="14" height="16" viewBox="0 0 14 16"><rect x="1" y="1" width="12" height="14" fill="none" stroke="#5f6368" strokeWidth="2" /><rect x="8" y="1" width="5" height="14" fill="#5f6368" /></svg>
        <Avatar>
          <svg width="12" height="14" viewBox="0 0 12 14" fill="#3c4a5e"><circle cx="6" cy="4" r="3" /><path d="M0 14c0-4 2-6 6-6s6 2 6 6z" /></svg>
        </Avatar>
        <MoreVertical size={18} strokeWidth={2} />
      </ToolEnd>
    </Toolbar>
    <Bookmarks>
      <Bookmark><Globe />Screen Sharing</Bookmark>
      <Bookmark><Globe />https://www.dossie...</Bookmark>
      <Bookmark>
        <svg width="16" height="16" viewBox="0 0 16 16"><path d="M3 2l2 2h6l2-2v9l-2 3H5l-2-3z" fill="#8a9098" /><circle cx="6" cy="9" r="1" fill="#333" /><circle cx="10" cy="9" r="1" fill="#333" /></svg>
        GitHub Skills
      </Bookmark>
      <Bookmark>
        <svg width="16" height="18" viewBox="0 0 16 18"><rect width="16" height="18" rx="2" fill="#5aa6e8" /><circle cx="8" cy="4" r="2.4" fill="#e03030" /><circle cx="4" cy="13" r="2.4" fill="#e8d030" /><circle cx="12" cy="13" r="2.4" fill="#e8d030" /><path d="M8 6v3M8 9l-4 3M8 9l4 3" stroke="#333" /></svg>
        Learn Git Branching
      </Bookmark>
      <Bookmark>
        <svg width="16" height="14" viewBox="0 0 16 14"><rect width="16" height="14" rx="3" fill="#f00" /><path d="M6 4l5 3-5 3z" fill="#fff" /></svg>
        Lofi Girl - YouTube
      </Bookmark>
      <BookmarkEnd>
        <svg width="12" height="16" viewBox="0 0 12 16"><rect x=".5" y=".5" width="11" height="15" fill="#fbe08a" stroke="#e6c14a" /></svg>
        Autres favoris
      </BookmarkEnd>
    </Bookmarks>
    <PageRow>
      <Page>
        <Header>
          <Brand>
            <Logo />
            <BrandTitle>Partage d'écran</BrandTitle>
          </Brand>
          <HeadButton $kind="stop">■ Stop Watching!</HeadButton>
          <HeadButton $kind="full">
            <svg width="8" height="20" viewBox="0 0 8 20" fill="none" stroke="#dcdcff"><path d="M4 1v18M1 5l3-4 3 4M1 15l3 4 3-4" /></svg>
            Fullscreen
          </HeadButton>
        </Header>
        <Desktop>
          {desk.map((d, i) => (
            <DeskItem key={i}>
              <DeskIconBox>
                <Art name={d.n} />
                {d.s && <ShortcutBadge><ShortcutMark /></ShortcutBadge>}
              </DeskIconBox>
              {d.t && <DeskLabel>{d.t}</DeskLabel>}
            </DeskItem>
          ))}
          <FreeItem $x={1580} $y={254}>
            <DeskIconBox><Art name="folderDoc" /></DeskIconBox>
            <DeskLabel>Projets stagiaires</DeskLabel>
          </FreeItem>
          <FreeItem $x={1579} $y={746}>
            <DeskIconBox><Art name="mastermind" /></DeskIconBox>
            <DeskLabel>MasterMind20...</DeskLabel>
          </FreeItem>
          <FreeItem $x={1393} $y={830}>
            <DeskIconBox><Art name="folderDocB" /></DeskIconBox>
          </FreeItem>
          <FreeItem $x={1579} $y={830}>
            <DeskIconBox><Art name="folderDocB" /></DeskIconBox>
          </FreeItem>
          <Cursor width="20" height="30" viewBox="0 0 20 30">
            <path d="M1 1l18 18-7 1 5 9-4 1-5-9-6 6z" fill="#c8ccd4" />
          </Cursor>
          <DarkWindow>
            <Dialog dark project="ConsoleApp6" path="C:\Users\CRM\source\repos" solution="ConsoleApp6" focusSolution />
          </DarkWindow>
        </Desktop>
      </Page>
      <Scrollbar>
        <ScrollArrow />
        <ScrollThumb />
        <ScrollArrow $down />
      </Scrollbar>
    </PageRow>
  </MonitorBody>
);

export default function App() {
  return (
    <Screen>
      <GlobalStyle />
      <Monitor>
        <MonitorBody>
          <Dialog project="ConsoleApp1" path="C:\Users\Stagiaire.CRM-UC-3924\source\repos" solution="ConsoleApp1" />
        </MonitorBody>
        <Taskbar>
          <TaskCell><WinLogo /></TaskCell>
          <TaskCell><SearchGlyph color="#fff" /></TaskCell>
          <TaskApps />
          <Tray>
            <Clock $pad={6}><span>15:00</span><span>27/10/2022</span></Clock>
          </Tray>
        </Taskbar>
      </Monitor>
      <Monitor>
        <Browser />
        <Taskbar>
          <TaskCell $w={48}><WinLogo /></TaskCell>
          <SearchBox>
            <SearchGlyph color="#222" />
            Taper ici pour rechercher
          </SearchBox>
          <TaskApps />
          <Tray>
            <Sun />
            <TrayText $left={10}>22°C</TrayText>
            <TrayText $left={9}>Ensoleillé</TrayText>
            <TrayIcon $left={34}><ChevronUp size={16} strokeWidth={1.2} /></TrayIcon>
            <TrayIcon $left={8}>
              <svg width="14" height="18" viewBox="0 0 14 18" fill="none" stroke="#fff"><rect x="1" y="4" width="8" height="10" rx="2" /><path d="M10 7l3-2v8l-3-2M3 1h4M3 17h4" /></svg>
            </TrayIcon>
            <TrayIcon $left={7}>
              <svg width="16" height="18" viewBox="0 0 16 18" fill="none" stroke="#fff"><rect x="1" y="2" width="6" height="9" /><rect x="7" y="2" width="8" height="10" /><path d="M11 12v3M7 15.5h8" /></svg>
            </TrayIcon>
            <TrayIcon $left={6}>
              <svg width="16" height="16" viewBox="0 0 16 16" fill="none" stroke="#fff"><path d="M1 6h2l4-3v10l-4-3H1zM10 6l4 4M14 6l-4 4" /></svg>
            </TrayIcon>
            <TrayText $left={5}>FRA</TrayText>
            <TrayIcon $left={12}>
              <Clock $pad={0}><span>15:00</span><span>27/10/2022</span></Clock>
            </TrayIcon>
            <Notify>
              <svg width="17" height="16" viewBox="0 0 17 16" fill="#fff"><path d="M0 0h17v12H6l-3 3v-3H0z" /><path d="M3 4h11M3 7h11" stroke="#1b2a40" /></svg>
              <NotifyBadge>5</NotifyBadge>
            </Notify>
          </Tray>
        </Taskbar>
      </Monitor>
    </Screen>
  );
}
